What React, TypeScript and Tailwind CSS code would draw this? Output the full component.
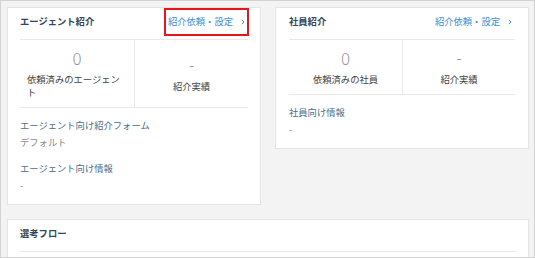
const font = { fontFamily: '"Noto Sans CJK JP", "Noto Sans", sans-serif' };

function Chevron() {
  return (
    <svg width="4" height="6" viewBox="0 0 4 6" className="ml-[8px]">
      <path d="M0.8 0.8 L3 3 L0.8 5.2" fill="none" stroke="#3d8fd1" strokeWidth="1" />
    </svg>
  );
}

function CardHeader({ title, boxed }: { title: string; boxed?: boolean }) {
  return (
    <div className="flex h-[32px] items-center justify-between border-b border-[#e9e9e9] pb-[3px]">
      <span className="text-[9.3px] font-bold text-[#33475b]">{title}</span>
      <span className="relative flex items-center pr-[3px] text-[9.3px] text-[#3d8fd1]">
        紹介依頼・設定
        <Chevron />
        {boxed && (
          <span className="absolute -left-[4px] -right-[1px] -top-[7px] -bottom-[7px] border-2 border-[#e8161a]" />
        )}
      </span>
    </div>
  );
}

function Stats({ label }: { label: string }) {
  return (
    <div className="grid grid-cols-2 border-b border-[#e9e9e9]">
      <div className="flex flex-col items-center px-[7px] py-[8px]">
        <div className="text-[17px] font-light leading-[20px] text-[#9a9a9a]">0</div>
        <div className="mt-[5px] text-left text-[9.3px] leading-[13px] text-[#444]">{label}</div>
      </div>
      <div className="flex flex-col items-center justify-center border-l border-[#e9e9e9] py-[7px]">
        <div className="text-[15px] leading-[20px] text-[#9a9a9a]">-</div>
        <div className="mt-[5px] text-[9.3px] leading-[13px] text-[#444]">紹介実績</div>
      </div>
    </div>
  );
}

function Info({ label, value, first }: { label: string; value: string; first?: boolean }) {
  return (
    <div className={first ? '' : 'mt-[13px]'}>
      <div className="text-[9.3px] leading-[13px] text-[#4d6d88]">{label}</div>
      <div className="mt-[4px] text-[9.3px] leading-[13px] text-[#8a8a8a]">{value}</div>
    </div>
  );
}

export default function App() {
  return (
    <div style={font} className="h-[258px] w-[535px] overflow-hidden border border-[#d2d2d2] bg-[#f3f3f3] pl-[6px] pt-[6px]">
      <div className="flex items-start gap-[14px]">
        <div className="w-[254px] border border-[#e4e4e4] bg-white px-[12px] pb-[12px]">
          <CardHeader title="エージェント紹介" boxed />
          <Stats label="依頼済みのエージェント" />
          <div className="pt-[11px]">
            <Info label="エージェント向け紹介フォーム" value="デフォルト" first />
            <Info label="エージェント向け情報" value="-" />
          </div>
        </div>
        <div className="w-[254px] border border-[#e4e4e4] bg-white px-[13px] pb-[12px]">
          <CardHeader title="社員紹介" />
          <Stats label="依頼済みの社員" />
          <div className="pt-[11px]">
            <Info label="社員向け情報" value="-" first />
          </div>
        </div>
      </div>
      <div className="mt-[14px] h-[60px] w-[522px] border border-[#e4e4e4] bg-white px-[12px]">
        <div className="flex h-[32px] items-center border-b border-[#e9e9e9] pb-[3px]">
          <span className="text-[9.3px] font-bold text-[#33475b]">選考フロー</span>
        </div>
      </div>
    </div>
  );
}
